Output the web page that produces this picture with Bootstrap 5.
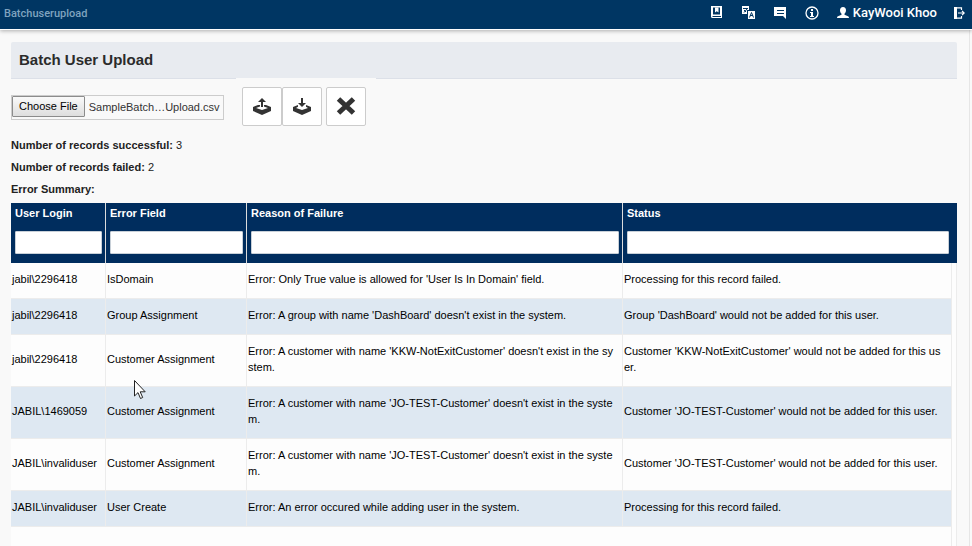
<!DOCTYPE html>
<html lang="en">
<head>
<meta charset="utf-8">
<meta name="viewport" content="width=device-width, initial-scale=1">
<title>Batch User Upload</title>
<link href="https://cdn.jsdelivr.net/npm/bootstrap@5.3.0/dist/css/bootstrap.min.css" rel="stylesheet">
<style>
body{font-family:"Liberation Sans",Arial,sans-serif;font-size:11px;line-height:16px;color:#222;background:#f9f9f9;min-height:100vh;overflow:hidden}
.topbar{background:#003663;min-height:30px;border-bottom:1px solid #fff;box-shadow:0 1px 4px rgba(0,0,0,.3);padding:0 7px 4px 4px;position:relative}
.topbar a{color:#fff;text-decoration:none;line-height:1;display:flex;align-items:center}
.topbar .crumb{color:#7fa3bf;font:500 11px/16px Roboto,sans-serif;padding-top:2px}
.topbar .user{font:500 13px/18px Roboto,sans-serif;gap:4px}
.tools{gap:18px}
.page-area{margin-right:2px;border-right:1px solid #e6e6e6;padding:12px 12px 0 11px}
.title-bar{background:#e8ebf0;border-bottom:1px solid #dce0e8;border-radius:2px 2px 0 0;padding:8px;font-size:15px;line-height:20px;font-weight:bold;color:#2b2b2b;margin:0}
.upload-row{gap:12px}
.file-box{border:1px solid #ccc;padding:0 2px 2px 0;width:213px;height:25px;gap:4px;color:#333;margin-top:16px}
.file-box button{border:1px solid #8c8c8c;background:linear-gradient(#fafafa,#dedede);padding:0 6px;border-radius:1px;line-height:19px;color:#000;white-space:nowrap}
.action-box{background:#f9f9f9;margin-top:-1px;padding:9px 10px 0 6px}
.tool-btn{width:40px;height:39px;background:#fff;border:1px solid #ccc;border-radius:2px;padding:0;display:flex;align-items:center;justify-content:center}
.counts{padding-top:11px}
.counts p{margin:0 0 6px}
.grid-box{background:#fdfdfd;box-shadow:inset -1px 0 #ececec}
.result-grid{table-layout:fixed;width:100%;border-collapse:separate;border-spacing:0;color:#000}
.result-grid th{background:#002d5e;color:#fff;height:60px;vertical-align:top;padding:2px 3px 0 4px;border-right:1px solid #dcdcdc}
.result-grid th label{display:block;margin-bottom:10px}
.result-grid th input{display:block;width:100%;height:23px;border:1px solid #c8d0d8;background:#fff;padding:0 4px;border-radius:1px}
.result-grid th.last-col{border-right-color:#002d5e;padding-right:2px}
.result-grid th.gutter{border:0;padding:0}
.result-grid td{height:36px;padding:8px 6px 11px 1px;vertical-align:middle;border-right:1px solid #ececec;border-bottom:1px solid #ececec;word-break:break-all}
.result-grid tr.alt td{background:#dee8f2}
.result-grid td.gutter,.result-grid tr.alt td.gutter{background:none;border:0;padding:0}
.rest{border-right:1px solid #ececec;margin-right:5px}
.pointer{position:absolute;left:134px;top:380px}
</style>
<script src="https://cdn.jsdelivr.net/npm/bootstrap@5.3.0/dist/js/bootstrap.bundle.min.js"></script>
</head>
<body class="d-flex flex-column">
<header class="topbar d-flex justify-content-between align-items-center">
<a class="crumb" href="#">Batchuserupload</a>
<nav class="tools d-flex align-items-center" aria-label="Tools">
<a href="#" aria-label="Manual"><svg width="14" height="14" viewBox="0 0 14 14"><path fill="#fff" fill-rule="evenodd" d="M2 0h11v12H3.500A1.500 1.500 0 0 1 2 10.500zM4 1.500v7h7v-7zM3.500 10v1H12v-1z"/><path fill="#fff" d="M6 1.500h3.500v5L7.750 5.300 6 6.500z"/></svg></a>
<a href="#" aria-label="Language"><svg width="14" height="14" viewBox="0 0 14 14"><path fill="#fff" d="M1 0h7v4h-2v4H1z"/><path fill="#fff" d="M7 5h7v8H7z"/><path fill="none" stroke="#003663" d="M2 2.500h5M6 3L3 6.500M3 4l2 2M8.500 11.500l2-5 2 5M9 9.500h3"/></svg></a>
<a href="#" aria-label="Messages"><svg width="14" height="14" viewBox="0 0 14 14"><path fill="#fff" d="M1 1h12v12l-3-3H1z"/><path stroke="#003663" d="M4 4.500h7M4 7.500h7"/></svg></a>
<a href="#" aria-label="Information"><svg width="14" height="14" viewBox="0 0 14 14"><circle cx="7" cy="7" r="6" fill="none" stroke="#fff" stroke-width="1.300"/><path fill="#fff" d="M6 3h2v2H6zM5 6h3v4h1v1H5v-1h1V7H5z"/></svg></a>
<div class="d-flex align-items-center gap-3">
<a href="#" class="user"><svg width="12" height="12" viewBox="0 0 12 12"><path fill="#fff" d="M6 0c2 0 3 1.400 3 3.300 0 1.500-.6 2.700-1.500 3.400v1L11 9.200c.7.300 1 .8 1 1.800H0c0-1 .3-1.500 1-1.800l3.500-1.500v-1C3.600 6 3 4.800 3 3.300 3 1.400 4 0 6 0z"/></svg>KayWooi Khoo</a>
<a href="#" aria-label="Log out"><svg width="12" height="14" viewBox="0 0 12 14"><path fill="none" stroke="#fff" stroke-width="1.200" d="M8.500 4V1.800H2v10.400h6.500V10M5 7h6M9 4.800L11.200 7 9 9.200"/><path fill="#fff" d="M1 1h3v12H1z"/></svg></a>
</div>
</nav>
</header>
<main class="page-area flex-grow-1 d-flex flex-column">
<h1 class="title-bar">Batch User Upload</h1>
<div class="upload-row d-flex align-items-start">
<div class="file-box d-flex align-items-center">
<button type="button" onclick="document.getElementById('csv').click()">Choose File</button>
<span class="text-nowrap">SampleBatch…Upload.csv</span>
<input type="file" id="csv" aria-label="CSV file" hidden>
</div>
<div class="action-box d-flex gap-1">
<div class="d-flex">
<button type="button" class="tool-btn" aria-label="Upload"><svg width="20" height="18" viewBox="0 0 20 18"><path fill="#333" d="M10 0l4 4h-3v5H9V4H6zM1 9l5-2h2v1.500L4 10l6 2 6-2-4-1.500V7h2l5 2v4l-9 4-9-4z"/></svg></button>
<button type="button" class="tool-btn" aria-label="Download"><svg width="20" height="18" viewBox="0 0 20 18"><path fill="#333" d="M9 0h2v5h3l-4 4-4-4h3zM1 9l5-2v1.700L4 10l6 2 6-2-2-1.300V7l5 2v4l-9 4-9-4z"/></svg></button>
</div>
<button type="button" class="tool-btn" aria-label="Clear"><svg width="20" height="20" viewBox="0 0 20 20"><path stroke="#333" stroke-width="5" d="M2.500 2l15 14M17.500 2l-15 14"/></svg></button>
</div>
</div>
<div class="counts">
<p><b>Number of records successful:</b> 3</p>
<p><b>Number of records failed:</b> 2</p>
<p><b>Error Summary:</b></p>
</div>
<div class="grid-box flex-grow-1 d-flex flex-column">
<table class="result-grid">
<colgroup><col style="width:95px"><col style="width:141px"><col style="width:376px"><col><col style="width:5px"></colgroup>
<thead><tr>
<th><label for="f1">User Login</label><input id="f1" type="text"></th>
<th><label for="f2">Error Field</label><input id="f2" type="text"></th>
<th><label for="f3">Reason of Failure</label><input id="f3" type="text"></th>
<th class="last-col"><label for="f4">Status</label><input id="f4" type="text"></th>
<th class="gutter"></th>
</tr></thead>
<tbody>
<tr><td>jabil\2296418</td><td>IsDomain</td><td>Error: Only True value is allowed for 'User Is In Domain' field.</td><td>Processing for this record failed.</td><td class="gutter"></td></tr>
<tr class="alt"><td>jabil\2296418</td><td>Group Assignment</td><td>Error: A group with name 'DashBoard' doesn't exist in the system.</td><td>Group 'DashBoard' would not be added for this user.</td><td class="gutter"></td></tr>
<tr><td>jabil\2296418</td><td>Customer Assignment</td><td>Error: A customer with name 'KKW-NotExitCustomer' doesn't exist in the system.</td><td>Customer 'KKW-NotExitCustomer' would not be added for this user.</td><td class="gutter"></td></tr>
<tr class="alt"><td>JABIL\1469059</td><td>Customer Assignment</td><td>Error: A customer with name 'JO-TEST-Customer' doesn't exist in the system.</td><td>Customer 'JO-TEST-Customer' would not be added for this user.</td><td class="gutter"></td></tr>
<tr><td>JABIL\invaliduser</td><td>Customer Assignment</td><td>Error: A customer with name 'JO-TEST-Customer' doesn't exist in the system.</td><td>Customer 'JO-TEST-Customer' would not be added for this user.</td><td class="gutter"></td></tr>
<tr class="alt"><td>JABIL\invaliduser</td><td>User Create</td><td>Error: An error occured while adding user in the system.</td><td>Processing for this record failed.</td><td class="gutter"></td></tr>
</tbody>
</table>
<div class="rest flex-grow-1"></div>
</div>
</main>
<svg class="pointer" width="13" height="20" viewBox="0 0 13 20"><path fill="#fff" stroke="#222" d="M.5.5v15.500l3.500-3.400 2.500 5.900 2.200-1-2.500-5.700h5z"/></svg>
</body>
</html>
